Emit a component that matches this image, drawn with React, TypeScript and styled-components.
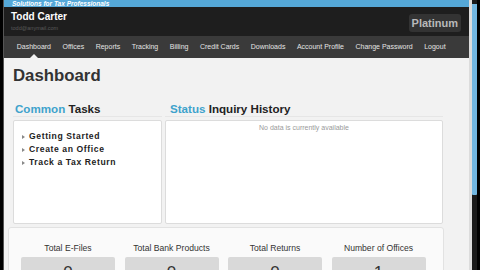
import React from "react"
import styled, { createGlobalStyle } from "styled-components"

const GlobalStyle = createGlobalStyle`
  html, body {
    margin: 0;
    padding: 0;
    background: #000;
    font-family: "Liberation Sans", Arial, sans-serif;
  }
`

const Screen = styled.div`
  display: flex;
  flex-direction: row;
  width: 480px;
  height: 270px;
  overflow: hidden;
  background: #050505;
`

const LeftEdge = styled.div`
  width: 4px;
  background: linear-gradient(to right, #000 0, #000 3px, #555 3px);
`

const Page = styled.div`
  flex: 1;
  display: flex;
  flex-direction: column;
  background: #f2f2f2;
  min-width: 0;

  & > * {
    flex-shrink: 0;
  }
`

const TopBand = styled.div`
  height: 7px;
  background: #55a8d8;
  color: #fff;
  font-size: 6.5px;
  font-weight: bold;
  font-style: italic;
  line-height: 7px;
  padding-left: 8px;
  white-space: nowrap;
`

const Header = styled.div`
  height: 29px;
  background: #1e1e1e;
  display: flex;
  align-items: center;
  justify-content: space-between;
  padding: 0 8px 0 7px;
`

const User = styled.div`
  display: flex;
  flex-direction: column;
  gap: 3px;
  margin-top: -1px;
`

const UserName = styled.div`
  color: #fff;
  font-size: 10px;
  font-weight: bold;
  line-height: 11px;
`

const UserMail = styled.div`
  color: #5a5a5a;
  font-size: 5.5px;
  line-height: 6px;
`

const Badge = styled.div`
  background: #333;
  color: #b9b9b9;
  font-size: 11px;
  font-weight: bold;
  padding: 2px 3px;
  border-radius: 3px;
  line-height: 14px;
  margin-top: 3px;
`

const Nav = styled.nav`
  height: 22px;
  background: #3a3a3a;
  display: flex;
  align-items: center;
  padding-left: 7px;
`

const NavItem = styled.div<{ $active?: boolean }>`
  position: relative;
  color: #e4e4e4;
  font-size: 7px;
  padding: 0 5.75px;
  white-space: nowrap;
  line-height: 22px;

  ${({ $active }) => $active && `
    &:after {
      content: "";
      position: absolute;
      left: 50%;
      bottom: 0;
      margin-left: -4px;
      border-left: 4px solid transparent;
      border-right: 4px solid transparent;
      border-bottom: 4px solid #f2f2f2;
    }
  `}
`

const Main = styled.main`
  padding: 0 0 0 9px;
`

const Title = styled.h1`
  margin: 8px 0 0;
  font-size: 16.8px;
  line-height: 20px;
  color: #333;
  font-weight: bold;
`

const Columns = styled.div`
  display: grid;
  grid-template-columns: 149px 278px;
  column-gap: 3px;
  margin-top: 16px;
`

const SectionHead = styled.h2<{ $indent?: number }>`
  margin: 0 0 3px;
  padding-left: ${({ $indent }) => $indent ?? 2}px;
  font-size: 11.6px;
  line-height: 14px;
  color: #222;
  font-weight: bold;
  border-bottom: 1px solid #e6e6e6;

  span {
    color: #3ea2cc;
  }
`

const Panel = styled.div`
  height: 102px;
  background: #fff;
  border: 1px solid #dcdcdc;
  border-radius: 2px;
`

const TaskList = styled.ul`
  list-style: none;
  margin: 0;
  padding: 9px 0 0 8px;
`

const Task = styled.li`
  display: flex;
  align-items: center;
  gap: 4px;
  font-size: 8.6px;
  font-weight: bold;
  letter-spacing: 0.6px;
  color: #222;
  line-height: 13px;

  &:before {
    content: "";
    border-top: 2.5px solid transparent;
    border-bottom: 2.5px solid transparent;
    border-left: 3.5px solid #888;
  }
`

const Empty = styled.div`
  text-align: center;
  font-size: 7px;
  color: #9a9a9a;
  margin-top: 3px;
`

const Totals = styled.div`
  margin: 3px 0 0 -5px;
  width: 436px;
  height: 60px;
  background: #fafafa;
  border: 1px solid #e2e2e2;
  border-radius: 3px;
  box-sizing: border-box;
  display: grid;
  grid-template-columns: repeat(4, 94px);
  column-gap: 9.5px;
  padding: 15px 0 0 12px;
`

const Stat = styled.div`
  display: flex;
  flex-direction: column;
  align-items: center;
`

const StatLabel = styled.div`
  font-size: 8.6px;
  color: #333;
  line-height: 11px;
  white-space: nowrap;
`

const StatBox = styled.div`
  margin-top: 3px;
  width: 94px;
  height: 40px;
  background: #d9d9d9;
  border-radius: 2px;
  text-align: center;
  color: #333;
  font-size: 17px;
  line-height: 20px;
  padding-top: 6px;
  box-sizing: border-box;
`

const Scroll = styled.div`
  width: 8px;
  display: flex;
  flex-direction: column;
  background: #1a1a1a;
  border-left: 3px solid #dcdcdc;
  box-sizing: border-box;
`

const Thumb = styled.div`
  margin-top: 4px;
  height: 191px;
  background: #72b6e0;
  border-radius: 0 0 1px 1px;
`

const RightEdge = styled.div`
  width: 3px;
  background: #000;
`

const navItems = [
  "Dashboard", "Offices", "Reports", "Tracking", "Billing", "Credit Cards",
  "Downloads", "Account Profile", "Change Password", "Logout",
]

const stats: [string, number][] = [
  ["Total E-Files", 0],
  ["Total Bank Products", 0],
  ["Total Returns", 0],
  ["Number of Offices", 1],
]

const App = () => (
  <>
    <GlobalStyle />
    <Screen>
      <LeftEdge />
      <Page>
        <TopBand>Solutions for Tax Professionals</TopBand>
        <Header>
          <User>
            <UserName>Todd Carter</UserName>
            <UserMail>todd@anymail.com</UserMail>
          </User>
          <Badge>Platinum</Badge>
        </Header>
        <Nav>
          {navItems.map((item, i) => <NavItem key={item} $active={i === 0}>{item}</NavItem>)}
        </Nav>
        <Main>
          <Title>Dashboard</Title>
          <Columns>
            <div>
              <SectionHead><span>Common</span> Tasks</SectionHead>
              <Panel>
                <TaskList>
                  <Task>Getting Started</Task>
                  <Task>Create an Office</Task>
                  <Task>Track a Tax Return</Task>
                </TaskList>
              </Panel>
            </div>
            <div>
              <SectionHead $indent={5}><span>Status</span> Inquiry History</SectionHead>
              <Panel>
                <Empty>No data is currently available</Empty>
              </Panel>
            </div>
          </Columns>
          <Totals>
            {stats.map(([label, value]) => (
              <Stat key={label}>
                <StatLabel>{label}</StatLabel>
                <StatBox>{value}</StatBox>
              </Stat>
            ))}
          </Totals>
        </Main>
      </Page>
      <Scroll>
        <Thumb />
      </Scroll>
      <RightEdge />
    </Screen>
  </>
)

export default App
